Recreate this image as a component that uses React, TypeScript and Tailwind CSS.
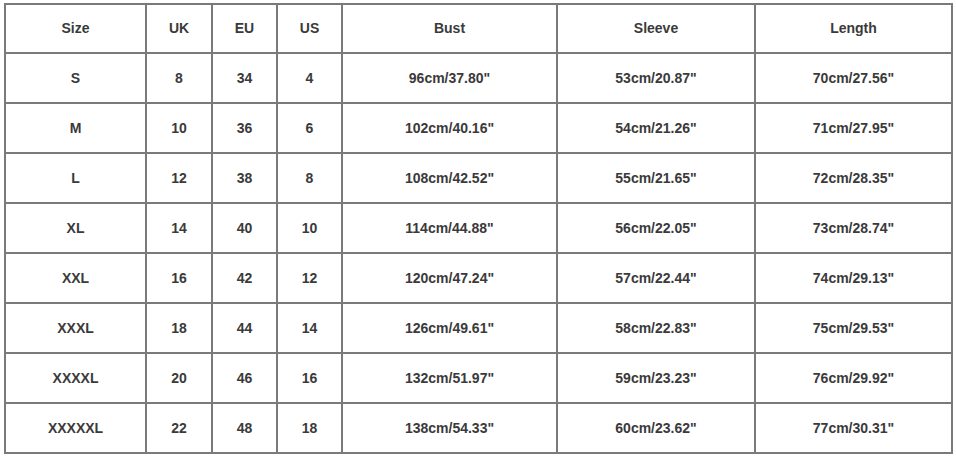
const headers = ['Size', 'UK', 'EU', 'US', 'Bust', 'Sleeve', 'Length'];

const rows = [
  ['S', '8', '34', '4', '96cm/37.80"', '53cm/20.87"', '70cm/27.56"'],
  ['M', '10', '36', '6', '102cm/40.16"', '54cm/21.26"', '71cm/27.95"'],
  ['L', '12', '38', '8', '108cm/42.52"', '55cm/21.65"', '72cm/28.35"'],
  ['XL', '14', '40', '10', '114cm/44.88"', '56cm/22.05"', '73cm/28.74"'],
  ['XXL', '16', '42', '12', '120cm/47.24"', '57cm/22.44"', '74cm/29.13"'],
  ['XXXL', '18', '44', '14', '126cm/49.61"', '58cm/22.83"', '75cm/29.53"'],
  ['XXXXL', '20', '46', '16', '132cm/51.97"', '59cm/23.23"', '76cm/29.92"'],
  ['XXXXXL', '22', '48', '18', '138cm/54.33"', '60cm/23.62"', '77cm/30.31"'],
];

const widths = ['w-[141px]', 'w-[66px]', 'w-[65px]', 'w-[65px]', 'w-[215px]', 'w-[198px]', 'w-[197px]'];

export default function App() {
  return (
    <div className="w-[956px] h-[457px] bg-white pl-[4px] pt-[3px] font-['Liberation_Sans',Arial,sans-serif]">
      <table className="table-fixed border-collapse w-[948px] text-[14px] font-bold text-[#3a3a3a]">
        <colgroup>
          {widths.map((w, i) => (
            <col key={i} className={w} />
          ))}
        </colgroup>
        <thead>
          <tr className="h-[49px]">
            {headers.map((h) => (
              <th key={h} className="border-2 border-[#7a7a7a] text-center align-middle font-bold">
                {h}
              </th>
            ))}
          </tr>
        </thead>
        <tbody>
          {rows.map((r) => (
            <tr key={r[0]} className="h-[50px]">
              {r.map((c, i) => (
                <td key={i} className="border-2 border-[#7a7a7a] text-center align-middle">
                  {c}
                </td>
              ))}
            </tr>
          ))}
        </tbody>
      </table>
    </div>
  );
}
